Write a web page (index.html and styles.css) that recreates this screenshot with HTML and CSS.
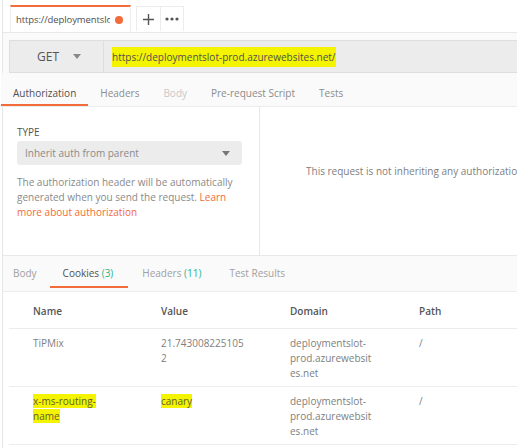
FILE: index.html
```html
<!DOCTYPE html>
<html>
<head>
<meta charset="utf-8">
<link rel="stylesheet" href="styles.css">
</head>
<body>
<div class="app">
  <div class="tabbar">
    <div class="tab">
      <span class="tab-title">https://deploymentslot-prod</span>
      <span class="dot"></span>
    </div>
    <div class="tab-btn plus">
      <svg width="11" height="11" viewBox="0 0 11 11"><path d="M5.5 0v11M0 5.5h11" stroke="#555" stroke-width="1.4"/></svg>
    </div>
    <div class="tab-btn more">
      <svg width="14" height="4" viewBox="0 0 14 4"><circle cx="2" cy="2" r="1.6" fill="#555"/><circle cx="7" cy="2" r="1.6" fill="#555"/><circle cx="12" cy="2" r="1.6" fill="#555"/></svg>
    </div>
  </div>

  <div class="reqbar">
    <div class="method">
      <span>GET</span>
      <svg width="8" height="5" viewBox="0 0 8 5"><path d="M0 0h8L4 5z" fill="#888"/></svg>
    </div>
    <div class="url"><span class="hl">https://deploymentslot-prod.azurewebsites.net/</span></div>
  </div>

  <div class="reqtabs">
    <div class="rtab active">Authorization</div>
    <div class="rtab">Headers</div>
    <div class="rtab disabled">Body</div>
    <div class="rtab">Pre-request Script</div>
    <div class="rtab">Tests</div>
  </div>

  <div class="auth">
    <div class="auth-left">
      <div class="label">TYPE</div>
      <div class="select">
        <span>Inherit auth from parent</span>
        <svg width="8" height="5" viewBox="0 0 8 5"><path d="M0 0h8L4 5z" fill="#777"/></svg>
      </div>
      <p class="desc">The authorization header will be automatically generated when you send the request. <span class="link">Learn more about authorization</span></p>
    </div>
    <div class="auth-right">
      <span>This request is not inheriting any authorization helper at the moment.</span>
    </div>
  </div>

  <div class="restabs">
    <div class="stab">Body</div>
    <div class="stab active">Cookies <span class="count">(3)</span></div>
    <div class="stab">Headers <span class="count">(11)</span></div>
    <div class="stab">Test Results</div>
  </div>

  <div class="table">
    <div class="row head">
      <div class="cell">Name</div>
      <div class="cell">Value</div>
      <div class="cell">Domain</div>
      <div class="cell">Path</div>
    </div>
    <div class="row">
      <div class="cell">TiPMix</div>
      <div class="cell">21.743008225105<br>2</div>
      <div class="cell">deploymentslot-<br>prod.azurewebsit<br>es.net</div>
      <div class="cell">/</div>
    </div>
    <div class="row">
      <div class="cell"><span class="hl">x-ms-routing-</span><br><span class="hl">name</span></div>
      <div class="cell"><span class="hl">canary</span></div>
      <div class="cell">deploymentslot-<br>prod.azurewebsit<br>es.net</div>
      <div class="cell">/</div>
    </div>
  </div>
</div>
</body>
</html>
```

FILE: styles.css
```css
* { box-sizing: border-box; }
html, body { margin: 0; padding: 0; }
body {
  width: 517px;
  height: 448px;
  overflow: hidden;
  background: #fff;
  font-family: "Open Sans", "Noto Sans", sans-serif;
  font-size: 10px;
  color: #808080;
}
.app {
  width: 517px;
  height: 448px;
  border-left: 1px solid #e6e6e6;
  margin-left: 2px;
}
.tabbar {
  height: 33px;
  display: flex;
  align-items: flex-end;
  padding-left: 7px;
  border-bottom: 1px solid #e8e8e8;
  background: #fff;
}
.tab {
  width: 121px;
  height: 27px;
  border-top: 2px solid #f26b3a;
  border-left: 1px solid #ececec;
  border-right: 1px solid #ececec;
  display: flex;
  align-items: center;
  padding-left: 5px;
  color: #505050;
  font-size: 9.5px;
  letter-spacing: -0.1px;
}
.tab-title { flex: 1; white-space: nowrap; overflow: hidden; width: 93px; }
.dot {
  width: 8px; height: 8px; border-radius: 50%;
  background: #f26b3a;
  margin: 0 7px 0 5px;
  flex: none;
}
.tab-btn {
  height: 25px;
  display: flex;
  align-items: center;
  justify-content: center;
  border: 1px solid #ececec;
  border-bottom: none;
  margin-bottom: 1px;
}
.plus { width: 25px; margin-left: 5px; }
.more { width: 23px; border-left: none; }

.reqbar {
  display: flex;
  padding: 7px 0 0 6px;
  height: 40px;
  background: #fafafa;
}
.method {
  width: 95px;
  height: 33px;
  background: #ececec;
  border: 1px solid #dedede;
  display: flex;
  align-items: center;
  padding-left: 27px;
  gap: 14px;
  color: #555;
  font-size: 12px;
}
.url {
  flex: 1;
  height: 33px;
  background: #ececec;
  border: 1px solid #dedede;
  border-left: none;
  display: flex;
  align-items: center;
  padding-left: 8px;
  color: #505050;
  font-size: 10px;
  white-space: nowrap;
}
.hl {
  background: #f4f400;
  color: #606030;
}
.url .hl { color: #505050; padding: 3px 0; }

.reqtabs {
  display: flex;
  height: 34px;
  background: #fafafa;
  border-bottom: 1px solid #ececec;
  padding-top: 7px;
  margin-left: -2px;
}
.rtab {
  padding: 6px 12px 0;
  color: #8c8c8c;
}
.rtab.active {
  color: #505050;
  border-bottom: 2px solid #f26b3a;
}
.rtab.disabled { color: #c8c8c8; }

.auth {
  display: flex;
  height: 148px;
}
.auth-left {
  width: 257px;
  border-right: 1px solid #e8e8e8;
  padding: 18px 0 0 14px;
}
.label {
  font-size: 10px;
  color: #555;
  line-height: 14px;
  margin-bottom: 2px;
}
.select {
  width: 225px;
  height: 24px;
  background: #ececec;
  border-radius: 3px;
  display: flex;
  align-items: center;
  justify-content: space-between;
  padding: 0 12px 0 8px;
  color: #8a8a8a;
}
.desc {
  margin: 10px 0 0;
  line-height: 15px;
  color: #8a8a8a;
  width: 225px;
}
.link { color: #f26b3a; }
.auth-right {
  flex: 1;
  padding: 57px 0 0 46px;
  white-space: nowrap;
  overflow: hidden;
  color: #808080;
}

.restabs {
  display: flex;
  height: 37px;
  background: #fafafa;
  border-top: 1px solid #e8e8e8;
  border-bottom: 1px solid #ececec;
  padding-top: 10px;
}
.stab {
  padding: 0 14px;
  color: #a0a0a0;
  height: 22px;
}
.stab:first-child { padding-left: 10px; padding-right: 13px; }
.stab.active {
  color: #505050;
  border-bottom: 2px solid #f26b3a;
  padding: 0 15px 0 13px;
}
.count { color: #2bb58c; }

.table {
  margin-left: 6px;
}
.row {
  display: grid;
  grid-template-columns: 128px 129px 129px 1fr;
  border-bottom: 1px solid #ececec;
  padding: 7px 0 5px 24px;
  line-height: 15px;
}
.row.head {
  padding: 12px 0 9px 24px;
  color: #555;
  font-weight: 600;
}
.row .cell { white-space: nowrap; }
```
